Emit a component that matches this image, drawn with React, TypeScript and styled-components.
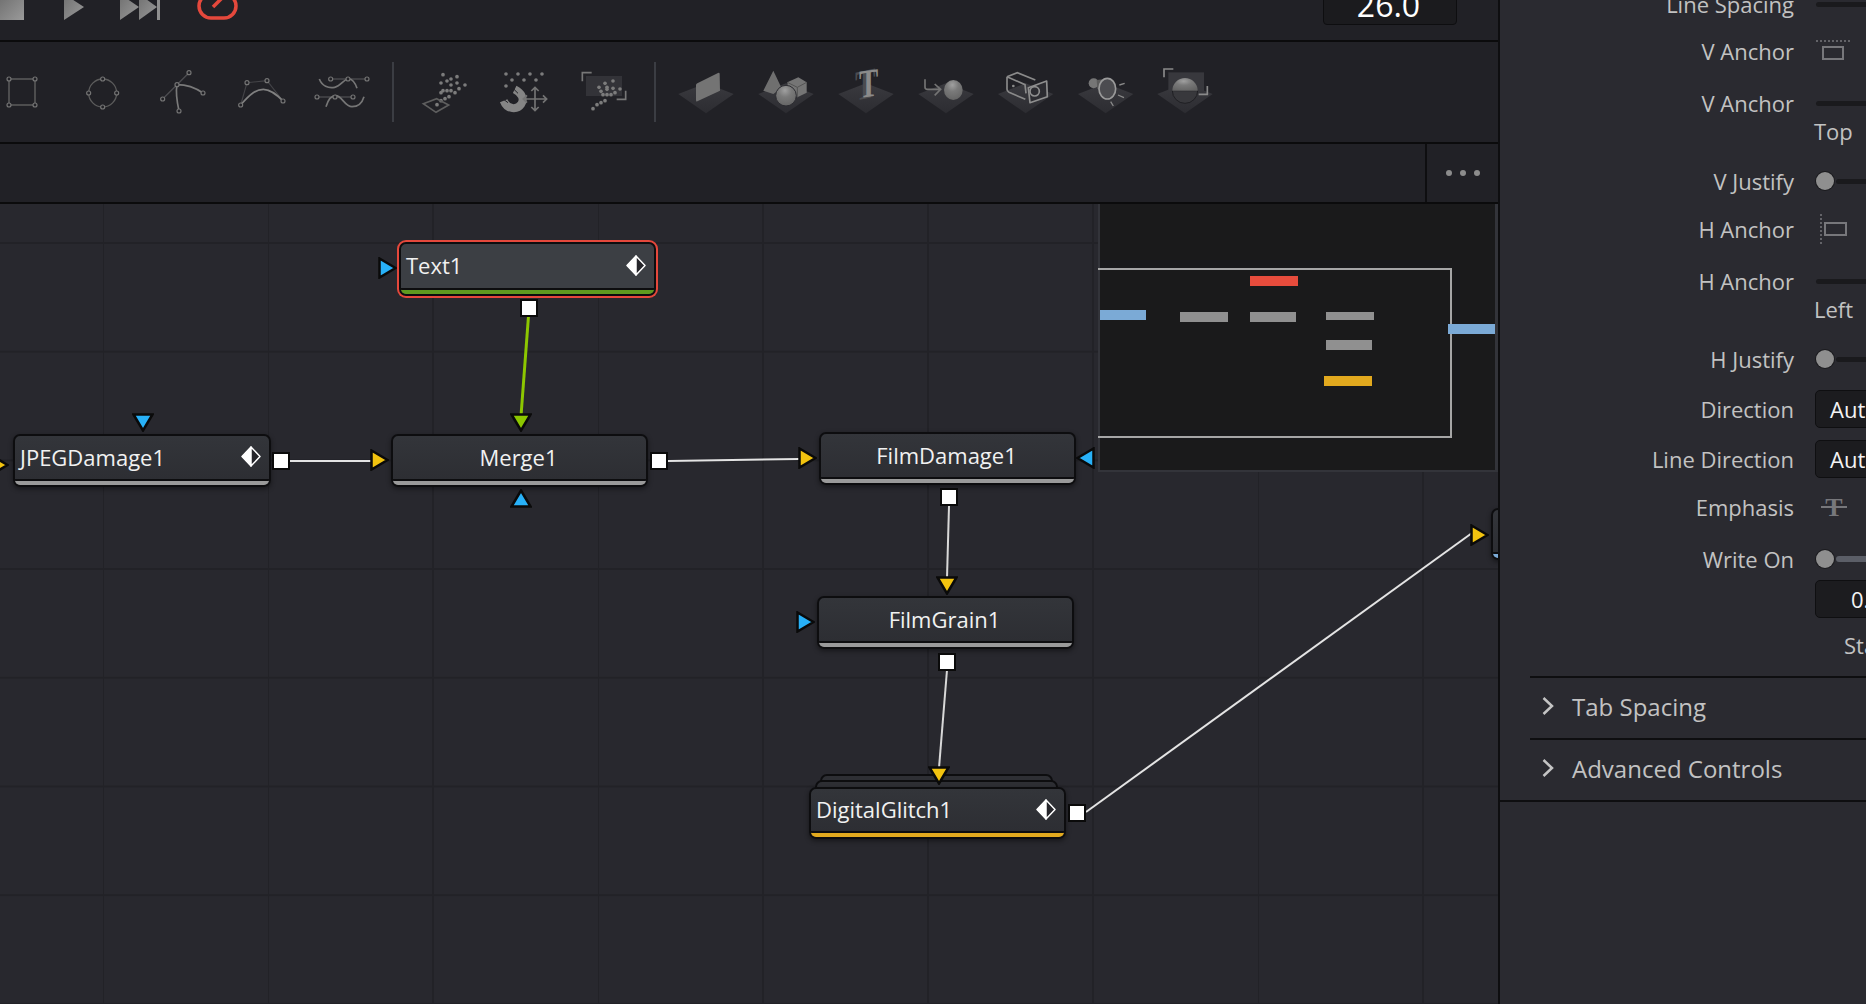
import React from "react";
import styled, { createGlobalStyle } from "styled-components";

const GlobalStyle = createGlobalStyle`
  html, body {
    margin: 0;
    height: 100%;
    background: #28282e;
    overflow: hidden;
    font-family: "Open Sans", "Noto Sans", sans-serif;
  }
`;

const Page = styled.div`
  display: flex;
  width: 1866px;
  height: 1004px;
  overflow: hidden;
`;

const Workspace = styled.div`
  display: flex;
  flex-direction: column;
  width: 1498px;
  flex-shrink: 0;
  border-right: 2px solid #0e0e10;
`;

const TransportBar = styled.div`
  display: flex;
  align-items: flex-end;
  height: 40px;
  overflow: hidden;
  background: #212126;
  border-bottom: 2px solid #0b0b0c;
  flex-shrink: 0;
`;

const TransportIcon = styled.svg<{ $gap: number }>`
  display: block;
  flex-shrink: 0;
  margin-left: ${(p) => p.$gap}px;
  margin-bottom: 20px;
`;

const FpsBox = styled.div`
  display: flex;
  align-items: flex-end;
  justify-content: center;
  margin-left: auto;
  margin-right: 41px;
  margin-bottom: 15px;
  width: 134px;
  height: 44px;
  flex-shrink: 0;
  box-sizing: border-box;
  padding-right: 3px;
  background: #1b1b1e;
  border: 1px solid #0e0e10;
  border-radius: 4px;
  color: #fff;
  font-size: 32px;
  line-height: 38px;
`;

const Toolbar = styled.div`
  display: flex;
  align-items: center;
  height: 100px;
  background: #212126;
  border-bottom: 2px solid #0b0b0c;
  flex-shrink: 0;
`;

const ToolGroup = styled.div<{ $left: number }>`
  display: flex;
  margin-left: ${(p) => p.$left}px;
`;

const ToolSeparator = styled.div<{ $left: number }>`
  width: 2px;
  height: 60px;
  margin-left: ${(p) => p.$left}px;
  background: #3b3d43;
`;

const TabBar = styled.div`
  display: flex;
  justify-content: flex-end;
  height: 58px;
  background: #212126;
  border-bottom: 2px solid #0b0b0c;
  flex-shrink: 0;
`;

const MoreButton = styled.div`
  display: flex;
  align-items: center;
  justify-content: center;
  gap: 8px;
  width: 71px;
  border-left: 2px solid #0e0e10;
`;

const MoreDot = styled.span`
  width: 6px;
  height: 6px;
  border-radius: 50%;
  background: #8c8c8c;
`;

const Canvas = styled.div`
  position: relative;
  flex: 1;
  overflow: hidden;
  background-color: #28282e;
  background-image: linear-gradient(to right, #222227 2px, transparent 2px),
    linear-gradient(to bottom, #222227 2px, transparent 2px);
  background-size: 165px 108.7px;
  background-position: 102px 38px;
`;

const Wires = styled.svg`
  position: absolute;
  left: 0;
  top: 0;
`;

const NodeBox = styled.div<{ $x: number; $y: number; $w: number; $h: number; $selected?: boolean }>`
  position: absolute;
  left: ${(p) => p.$x}px;
  top: ${(p) => p.$y}px;
  width: ${(p) => p.$w}px;
  height: ${(p) => p.$h}px;
  box-sizing: border-box;
  display: flex;
  flex-direction: column;
  overflow: hidden;
  border: 2px solid #0d0d0f;
  border-radius: 7px;
  background: ${(p) => (p.$selected ? "#3c3f44" : "linear-gradient(#33353a, #2c2d32)")};
  box-shadow: ${(p) => (p.$selected ? "0 0 0 2px #e5483c" : "0 2px 5px rgba(0, 0, 0, 0.45)")};
`;

const NodeLabel = styled.div<{ $center?: boolean }>`
  flex: 1;
  display: flex;
  align-items: center;
  justify-content: ${(p) => (p.$center ? "center" : "space-between")};
  padding: ${(p) => (p.$center ? "0 2px 2px 0" : "0 8px 2px 5px")};
  color: #f1f1f1;
  font-size: 22px;
  white-space: nowrap;
`;

const NodeBar = styled.div<{ $color: string }>`
  height: 4px;
  border-top: 2px solid #0d0d0f;
  background: ${(p) => p.$color};
  flex-shrink: 0;
`;

const StackEdge = styled.div<{ $x: number; $y: number; $w: number }>`
  position: absolute;
  left: ${(p) => p.$x}px;
  top: ${(p) => p.$y}px;
  width: ${(p) => p.$w}px;
  height: 20px;
  box-sizing: border-box;
  background: #2e2f34;
  border: 2px solid #0d0d0f;
  border-radius: 7px 7px 0 0;
`;

const OutputPort = styled.div<{ $x: number; $y: number }>`
  position: absolute;
  left: ${(p) => p.$x}px;
  top: ${(p) => p.$y}px;
  width: 18px;
  height: 18px;
  box-sizing: border-box;
  background: #fff;
  border: 2px solid #0a0a0a;
`;

const InputPort = styled.svg<{ $x: number; $y: number }>`
  position: absolute;
  left: ${(p) => p.$x}px;
  top: ${(p) => p.$y}px;
`;

const Minimap = styled.div`
  position: absolute;
  left: 1098px;
  top: 0;
  width: 400px;
  height: 268px;
  box-sizing: border-box;
  background: #1a1a1b;
  border: solid #33343a;
  border-width: 0 3px 2px 2px;
`;

const MiniFrame = styled.div`
  position: absolute;
  left: -2px;
  top: 64px;
  width: 354px;
  height: 170px;
  box-sizing: border-box;
  border: solid #a6a6a6;
  border-width: 2px 2px 2px 0;
`;

const MiniNode = styled.div<{ $x: number; $y: number; $w: number; $h: number; $color: string }>`
  position: absolute;
  left: ${(p) => p.$x}px;
  top: ${(p) => p.$y}px;
  width: ${(p) => p.$w}px;
  height: ${(p) => p.$h}px;
  background: ${(p) => p.$color};
`;

const Inspector = styled.aside`
  flex: 1;
  min-width: 0;
  overflow: hidden;
  background: #2a2a30;
`;

const Rows = styled.div`
  margin-top: -10px;
`;

const Row = styled.div<{ $gap: number }>`
  display: grid;
  grid-template-columns: 294px 300px;
  grid-template-rows: 28px;
  column-gap: 21px;
  align-items: center;
  height: 28px;
  margin-top: ${(p) => p.$gap}px;
`;

const Label = styled.div`
  text-align: right;
  color: #c2c2c2;
  font-size: 22px;
  white-space: nowrap;
`;

const Track = styled.div<{ $light?: boolean; $inset?: number }>`
  height: ${(p) => (p.$light ? 6 : 5)}px;
  margin-left: ${(p) => p.$inset ?? 1}px;
  border-radius: 3px;
  background: ${(p) => (p.$light ? "#5b5e67" : "#1a1a1d")};
`;

const SliderWrap = styled.div`
  position: relative;
`;

const Thumb = styled.div`
  position: absolute;
  left: 1px;
  top: 50%;
  width: 18px;
  height: 18px;
  margin-top: -9px;
  box-sizing: border-box;
  border-radius: 50%;
  background: #8f8f8f;
  box-shadow: 0 0 0 1px #1b1b1e;
`;

const Field = styled.div<{ $inset: number }>`
  display: flex;
  align-items: center;
  height: 38px;
  box-sizing: border-box;
  padding-left: ${(p) => p.$inset}px;
  background: #1c1c1f;
  border: 1px solid #0f0f11;
  border-radius: 5px;
  color: #f4f4f4;
  font-size: 22px;
`;

const Caption = styled.div<{ $inset?: number }>`
  margin-left: -1px;
  padding-left: ${(p) => p.$inset ?? 0}px;
  color: #c2c2c2;
  font-size: 22px;
`;

const Section = styled.div`
  display: flex;
  align-items: center;
  gap: 18px;
  height: 56px;
  padding: 0 0 4px 12px;
  margin-left: 30px;
  border-top: 2px solid #0e0e10;
  color: #c2c2c2;
  font-size: 24px;
`;

const SectionsTop = styled.div`
  margin-top: 17px;
`;

const Divider = styled.div`
  height: 2px;
  background: #0e0e10;
`;

const ToolIcon = ({ origin, children }: { origin: number; children: React.ReactNode }) => (
  <svg width={80} height={100} viewBox={`${origin} -24 240 300`}>
    {children}
  </svg>
);

const Handle = ({ x, y }: { x: number; y: number }) => (
  <circle cx={x} cy={y} r={6} fill="#212126" stroke="#757575" strokeWidth={3.5} />
);

const Dots = ({ points, r = 5.5, fill = "#7c7c7c" }: { points: number[][]; r?: number; fill?: string }) => (
  <g fill={fill}>
    {points.map(([x, y]) => (
      <circle key={`${x}-${y}`} cx={x} cy={y} r={r} />
    ))}
  </g>
);

const Plate = ({ cx }: { cx: number }) => (
  <polygon points={`${cx - 83},132 ${cx},100 ${cx + 83},132 ${cx},190`} fill="url(#plate)" />
);

const SharedDefs = () => (
  <svg width={0} height={0} style={{ position: "absolute" }}>
    <defs>
      <linearGradient id="plate" x1="0" y1="0" x2="0" y2="1">
        <stop offset="0" stopColor="#3a3a3f" />
        <stop offset="1" stopColor="#2c2c31" />
      </linearGradient>
      <radialGradient id="ball" cx="0.45" cy="0.25" r="0.8">
        <stop offset="0" stopColor="#a0a0a0" />
        <stop offset="0.4" stopColor="#7a7a7a" />
        <stop offset="1" stopColor="#636363" />
      </radialGradient>
      <linearGradient id="transport" x1="0" y1="0" x2="1" y2="1">
        <stop offset="0" stopColor="#707070" />
        <stop offset="1" stopColor="#9a9a9a" />
      </linearGradient>
    </defs>
  </svg>
);

const RectTool = () => (
  <ToolIcon origin={-54}>
    <rect x={27} y={87} width={78} height={78} fill="none" stroke="#646464" strokeWidth={4} />
    <Handle x={27} y={87} />
    <Handle x={105} y={87} />
    <Handle x={27} y={165} />
    <Handle x={105} y={165} />
  </ToolIcon>
);

const EllipseTool = () => (
  <ToolIcon origin={186}>
    <ellipse cx={308} cy={129} rx={42} ry={42} fill="none" stroke="#5c5c5c" strokeWidth={4} />
    <Handle x={308} y={87} />
    <Handle x={266} y={129} />
    <Handle x={350} y={129} />
    <Handle x={308} y={171} />
  </ToolIcon>
);

const PolygonTool = () => (
  <ToolIcon origin={426}>
    <path d="M488 147 L531 104 L567 68" fill="none" stroke="#4c4c50" strokeWidth={4} />
    <path d="M531 104 C560 104 590 116 609 129 M531 104 C526 130 532 160 537 183" fill="none" stroke="#7a7a7a" strokeWidth={5} />
    <Handle x={567} y={68} />
    <Handle x={531} y={104} />
    <Handle x={488} y={147} />
    <Handle x={609} y={129} />
    <Handle x={537} y={183} />
  </ToolIcon>
);

const BezierTool = () => (
  <ToolIcon origin={666}>
    <path d="M722 165 L741 98 L801 92 L849 153" fill="none" stroke="#434347" strokeWidth={3.5} />
    <path d="M722 165 C752 130 770 118 790 118 C812 118 830 134 849 153" fill="none" stroke="#808080" strokeWidth={5} />
    <Handle x={722} y={165} />
    <Handle x={741} y={98} />
    <Handle x={801} y={92} />
    <Handle x={849} y={153} />
  </ToolIcon>
);

const BSplineTool = () => (
  <ToolIcon origin={906}>
    <path d="M992 87 L1101 87 M951 141 L1059 141" fill="none" stroke="#47474b" strokeWidth={4} />
    <path
      d="M958 87 C966 108 985 116 1004 112 C1024 108 1030 87 1046 87 C1058 87 1066 100 1071 115 M978 170 C984 150 994 137 1007 137 C1026 137 1034 170 1056 170 C1072 170 1086 160 1092 140"
      fill="none"
      stroke="#767676"
      strokeWidth={5}
    />
    <Handle x={992} y={87} />
    <Handle x={1044} y={87} />
    <Handle x={1101} y={87} />
    <Handle x={951} y={141} />
    <Handle x={1005} y={141} />
    <Handle x={1059} y={141} />
  </ToolIcon>
);

const EmitterTool = () => (
  <ToolIcon origin={75}>
    <Dots
      points={[
        [189, 74], [231, 80], [213, 87], [183, 99], [201, 93], [231, 99], [255, 105], [213, 105],
        [189, 122], [201, 122], [213, 122], [225, 128], [183, 128], [237, 116], [207, 140], [195, 146], [183, 152], [171, 164],
      ]}
    />
    <polygon points="130,161 170,146 206,165 168,187" fill="none" stroke="#5e5e5e" strokeWidth={5} />
  </ToolIcon>
);

const ForceTool = () => (
  <ToolIcon origin={315}>
    <Dots points={[[378, 72], [414, 72], [450, 72], [486, 72], [396, 90], [432, 90], [468, 90], [378, 108]]} />
    <path d="M371 152 C382 180 412 180 424 162 C434 146 424 128 404 118" fill="none" stroke="#858585" strokeWidth={24} />
    <path d="M360 140 L384 158 M392 108 L414 130" stroke="#212126" strokeWidth={3} />
    <path
      d="M465 112 V182 M430 147 H500 M454 123 L465 112 L476 123 M454 171 L465 182 L476 171 M441 136 L430 147 L441 158 M489 136 L500 147 L489 158"
      fill="none"
      stroke="#747474"
      strokeWidth={5}
    />
  </ToolIcon>
);

const RenderParticlesTool = () => (
  <ToolIcon origin={555}>
    <rect x={618} y={78} width={108} height={60} fill="#333338" />
    <path d="M607 94 V68 H635 M737 122 V148 H710" fill="none" stroke="#777" strokeWidth={5} />
    <Dots
      points={[
        [675, 100], [699, 93], [657, 112], [681, 112], [699, 115], [663, 124], [681, 118], [705, 128], [720, 117],
        [669, 134], [681, 134], [693, 134], [675, 152], [663, 158], [651, 164], [639, 176],
      ]}
    />
  </ToolIcon>
);

const PlaneTool = () => (
  <ToolIcon origin={15}>
    <Plate cx={138} />
    <path d="M112 100 L174 69 Q179 67 179 72 L180 122 L112 154 Q108 156 108 150 L108 105 Q108 102 112 100 Z" fill="#747474" />
  </ToolIcon>
);

const ShapesTool = () => (
  <ToolIcon origin={255}>
    <Plate cx={378} />
    <polygon points="340,62 310,122 340,132 365,115" fill="#6f6f6f" />
    <polygon points="382,97 415,82 440,97 440,128 412,142 385,122" fill="#757575" />
    <path d="M382 97 L412 112 L440 97 M412 112 V142" fill="none" stroke="#545454" strokeWidth={3} />
    <circle cx={378} cy={137} r={31} fill="url(#ball)" stroke="#2c2c31" strokeWidth={3} />
  </ToolIcon>
);

const TextTool = () => (
  <ToolIcon origin={495}>
    <Plate cx={618} />
    <g fontFamily="Liberation Serif, serif" fontWeight={700} textAnchor="middle">
      <text transform="translate(616 146) skewY(-12) scale(0.72 1)" fontSize={128} fill="#4b4b4f">T</text>
      <text transform="translate(626 140) skewY(-8) scale(0.72 1)" fontSize={120} fill="#8b8b8b">T</text>
    </g>
  </ToolIcon>
);

const MergeTool = () => (
  <ToolIcon origin={735}>
    <Plate cx={858} />
    <path d="M795 88 V112 Q795 118 802 118 H840 M824 102 L842 118 L824 136" fill="none" stroke="#747474" strokeWidth={5} />
    <ellipse cx={880} cy={120} rx={28} ry={30} fill="url(#ball)" />
  </ToolIcon>
);

const CameraTool = () => (
  <ToolIcon origin={75}>
    <Plate cx={197} />
    <path
      d="M141 80 L172 68 L226 90 M141 80 L141 118 Q141 124 147 127 L196 148 M141 80 L195 104 L198 130"
      fill="none"
      stroke="#8a8a8a"
      strokeWidth={5}
    />
    <circle cx={160} cy={108} r={4} fill="#8a8a8a" />
    <polygon points="205,113 260,93 262,140 210,158" fill="#2c2c31" stroke="#8f8f8f" strokeWidth={5} strokeLinejoin="round" />
    <circle cx={224} cy={124} r={14} fill="none" stroke="#8f8f8f" strokeWidth={5} />
  </ToolIcon>
);

const LightTool = () => (
  <ToolIcon origin={315}>
    <Plate cx={437} />
    <circle cx={401} cy={100} r={15} fill="#767676" />
    <path d="M410 90 L440 86 L440 145 L412 115 Z" fill="#5c5c5c" />
    <ellipse cx={442} cy={116} rx={25} ry={31} fill="#4c4c50" stroke="#9a9a9a" strokeWidth={5} />
    <path d="M478 105 L494 100 M474 135 L492 143 M452 155 L460 168" stroke="#8a8a8a" strokeWidth={4} />
  </ToolIcon>
);

const RenderTool = () => (
  <ToolIcon origin={555}>
    <Plate cx={675} />
    <rect x={625} y={67} width={107} height={58} fill="#38383d" />
    <path d="M612 82 V57 H640 M742 108 V133 H716" fill="none" stroke="#8a8a8a" strokeWidth={5} />
    <path d="M637 122 A38 38 0 0 0 713 122 Z" fill="#38383c" stroke="#1f1f23" strokeWidth={3} />
    <path d="M637 122 A38 38 0 0 1 713 122 Z" fill="url(#ball)" />
  </ToolIcon>
);

const Diamond = () => (
  <svg width={20} height={21} viewBox="0 0 20 21">
    <polygon points="10,1 1,10.5 10,20" fill="#fff" stroke="#fff" strokeWidth={1.5} strokeLinejoin="round" />
    <polygon points="10,1 19,10.5 10,20" fill="#26262b" stroke="#fff" strokeWidth={1.5} strokeLinejoin="round" />
  </svg>
);

type Dir = "right" | "left" | "down" | "up";

const arrowPoints = (dir: Dir, w: number, h: number) => {
  const i = 1.5;
  if (dir === "right") return `${i},${i} ${w - i},${h / 2} ${i},${h - i}`;
  if (dir === "left") return `${w - i},${i} ${i},${h / 2} ${w - i},${h - i}`;
  if (dir === "down") return `${i},${i} ${w - i},${i} ${w / 2},${h - i}`;
  return `${w / 2},${i} ${w - i},${h - i} ${i},${h - i}`;
};

const BLUE = "#28b1f8";
const YELLOW = "#f2c30f";
const GREEN = "#8cc700";

const ports: { x: number; y: number; dir: Dir; color: string }[] = [
  { x: 378, y: 53, dir: "right", color: BLUE },
  { x: 132, y: 209, dir: "down", color: BLUE },
  { x: -10, y: 250, dir: "right", color: YELLOW },
  { x: 370, y: 245, dir: "right", color: YELLOW },
  { x: 510, y: 209, dir: "down", color: GREEN },
  { x: 510, y: 285, dir: "up", color: BLUE },
  { x: 798, y: 243, dir: "right", color: YELLOW },
  { x: 1076, y: 243, dir: "left", color: BLUE },
  { x: 936, y: 372, dir: "down", color: YELLOW },
  { x: 796, y: 407, dir: "right", color: BLUE },
  { x: 928, y: 562, dir: "down", color: YELLOW },
  { x: 1470, y: 320, dir: "right", color: YELLOW },
];

const outputs = [
  { x: 520, y: 95 },
  { x: 272, y: 248 },
  { x: 650, y: 248 },
  { x: 940, y: 284 },
  { x: 938, y: 449 },
  { x: 1068, y: 600 },
];

const GREY_BAR = "#9a9a9a";

const nodes = [
  { name: "Text1", x: 399, y: 38, w: 257, h: 54, bar: "#5f9a1f", selected: true },
  { name: "JPEGDamage1", x: 13, y: 230, w: 258, h: 53, bar: GREY_BAR },
  { name: "Merge1", x: 391, y: 230, w: 257, h: 53, bar: GREY_BAR, center: true },
  { name: "FilmDamage1", x: 819, y: 228, w: 257, h: 53, bar: GREY_BAR, center: true },
  { name: "FilmGrain1", x: 817, y: 392, w: 257, h: 53, bar: GREY_BAR, center: true },
  { name: "DigitalGlitch1", x: 809, y: 583, w: 257, h: 52, bar: "#e2a91e" },
];

const miniNodes = [
  { x: 150, y: 72, w: 48, h: 10, color: "#e74c3c" },
  { x: 0, y: 106, w: 46, h: 10, color: "#7baad6" },
  { x: 80, y: 108, w: 48, h: 10, color: "#909090" },
  { x: 150, y: 108, w: 46, h: 10, color: "#909090" },
  { x: 226, y: 108, w: 48, h: 8, color: "#909090" },
  { x: 226, y: 136, w: 46, h: 10, color: "#909090" },
  { x: 224, y: 172, w: 48, h: 10, color: "#e2a91e" },
  { x: 348, y: 120, w: 47, h: 10, color: "#7baad6" },
];

const Chevron = () => (
  <svg width={12} height={20} viewBox="0 0 12 20">
    <path d="M1.5 2 L10 10 L1.5 18" fill="none" stroke="#c4c4c4" strokeWidth={2.5} />
  </svg>
);

const Slider = ({ light }: { light?: boolean }) => (
  <SliderWrap>
    <Track $light={light} $inset={21} />
    <Thumb />
  </SliderWrap>
);

export default function App() {
  return (
    <Page>
      <GlobalStyle />
      <SharedDefs />
      <Workspace>
        <TransportBar>
          <TransportIcon $gap={0} width={24} height={24} viewBox="0 0 24 24">
            <rect width={24} height={24} fill="url(#transport)" />
          </TransportIcon>
          <TransportIcon $gap={40} width={20} height={26} viewBox="0 0 20 26">
            <polygon points="0,0 20,13 0,26" fill="url(#transport)" />
          </TransportIcon>
          <TransportIcon $gap={36} width={40} height={26} viewBox="0 0 40 26">
            <polygon points="0,0 19,13 0,26" fill="url(#transport)" />
            <polygon points="19,0 37,13 19,26" fill="url(#transport)" />
            <rect x={37} width={3} height={26} fill="#8f8f8f" />
          </TransportIcon>
          <TransportIcon $gap={37} width={41} height={28} viewBox="0 0 41 28">
            <rect x={2} y={2} width={37} height={24} rx={12} fill="none" stroke="#e5483c" strokeWidth={3.5} />
            <path d="M16 15 L25 6" stroke="#e5483c" strokeWidth={3.5} />
          </TransportIcon>
          <FpsBox>26.0</FpsBox>
        </TransportBar>

        <Toolbar>
          <ToolGroup $left={-18}>
            <RectTool />
            <EllipseTool />
            <PolygonTool />
            <BezierTool />
            <BSplineTool />
          </ToolGroup>
          <ToolSeparator $left={10} />
          <ToolGroup $left={11}>
            <EmitterTool />
            <ForceTool />
            <RenderParticlesTool />
          </ToolGroup>
          <ToolSeparator $left={9} />
          <ToolGroup $left={9}>
            <PlaneTool />
            <ShapesTool />
            <TextTool />
            <MergeTool />
            <CameraTool />
            <LightTool />
            <RenderTool />
          </ToolGroup>
        </Toolbar>

        <TabBar>
          <MoreButton>
            <MoreDot />
            <MoreDot />
            <MoreDot />
          </MoreButton>
        </TabBar>

        <Canvas>
          <Wires width={1498} height={800}>
            <line x1={528.5} y1={112} x2={521} y2={212} stroke={GREEN} strokeWidth={3} />
            <line x1={290} y1={257} x2={372} y2={257} stroke="#e4e4e4" strokeWidth={2} />
            <line x1={668} y1={257} x2={800} y2={255} stroke="#e4e4e4" strokeWidth={2} />
            <line x1={949} y1={302} x2={947} y2={374} stroke="#d8d8d8" strokeWidth={2} />
            <line x1={947} y1={466} x2={939} y2={564} stroke="#d8d8d8" strokeWidth={2} />
            <line x1={1086} y1={608} x2={1472} y2={329} stroke="#e4e4e4" strokeWidth={2} />
          </Wires>

          <StackEdge $x={820} $y={570} $w={233} />
          <StackEdge $x={815} $y={576} $w={243} />

          {nodes.map((n) => (
            <NodeBox key={n.name} $x={n.x} $y={n.y} $w={n.w} $h={n.h} $selected={n.selected}>
              <NodeLabel $center={n.center}>
                {n.name}
                {!n.center && <Diamond />}
              </NodeLabel>
              <NodeBar $color={n.bar} />
            </NodeBox>
          ))}

          <NodeBox $x={1491} $y={304} $w={60} $h={52}>
            <NodeLabel />
            <NodeBar $color="#7baad6" />
          </NodeBox>

          {outputs.map((o) => (
            <OutputPort key={`${o.x}-${o.y}`} $x={o.x} $y={o.y} />
          ))}

          {ports.map((p) => {
            const vertical = p.dir === "down" || p.dir === "up";
            const w = vertical ? 22 : 19;
            const h = vertical ? 19 : 22;
            return (
              <InputPort key={`${p.x}-${p.y}`} $x={p.x} $y={p.y} width={w} height={h}>
                <polygon points={arrowPoints(p.dir, w, h)} fill={p.color} stroke="#0a0a0a" strokeWidth={2.5} />
              </InputPort>
            );
          })}

          <Minimap>
            <MiniFrame />
            {miniNodes.map((m) => (
              <MiniNode key={`${m.x}-${m.y}`} $x={m.x} $y={m.y} $w={m.w} $h={m.h} $color={m.color} />
            ))}
          </Minimap>
        </Canvas>
      </Workspace>

      <Inspector>
        <Rows>
          <Row $gap={0}>
            <Label>Line Spacing</Label>
            <Track />
          </Row>
          <Row $gap={19}>
            <Label>V Anchor</Label>
            <svg width={40} height={28} viewBox="0 0 40 28">
              <line x1={1} y1={4} x2={35} y2={4} stroke="#77777b" strokeWidth={1.5} strokeDasharray="2 2" />
              <rect x={8} y={10} width={20} height={12} fill="none" stroke="#77777b" strokeWidth={2} />
            </svg>
          </Row>
          <Row $gap={24}>
            <Label>V Anchor</Label>
            <Track />
          </Row>
          <Row $gap={0}>
            <span />
            <Caption>Top</Caption>
          </Row>
          <Row $gap={22}>
            <Label>V Justify</Label>
            <Slider />
          </Row>
          <Row $gap={20}>
            <Label>H Anchor</Label>
            <svg width={40} height={32} viewBox="0 0 40 32">
              <line x1={6} y1={1} x2={6} y2={31} stroke="#77777b" strokeWidth={1.5} strokeDasharray="2 2" />
              <rect x={10} y={10} width={21} height={12} fill="none" stroke="#77777b" strokeWidth={2} />
            </svg>
          </Row>
          <Row $gap={24}>
            <Label>H Anchor</Label>
            <Track />
          </Row>
          <Row $gap={0}>
            <span />
            <Caption>Left</Caption>
          </Row>
          <Row $gap={22}>
            <Label>H Justify</Label>
            <Slider />
          </Row>
          <Row $gap={22}>
            <Label>Direction</Label>
            <Field $inset={14}>Auto</Field>
          </Row>
          <Row $gap={22}>
            <Label>Line Direction</Label>
            <Field $inset={14}>Auto</Field>
          </Row>
          <Row $gap={20}>
            <Label>Emphasis</Label>
            <svg width={40} height={24} viewBox="0 0 40 24">
              <text x={19} y={21} fontFamily="Liberation Serif, serif" fontSize={26} fontWeight={700} fill="#77777b" textAnchor="middle">T</text>
              <line x1={6} y1={12} x2={32} y2={12} stroke="#77777b" strokeWidth={2} />
            </svg>
          </Row>
          <Row $gap={24}>
            <Label>Write On</Label>
            <Slider light />
          </Row>
          <Row $gap={12}>
            <span />
            <Field $inset={35}>0.0</Field>
          </Row>
          <Row $gap={18}>
            <span />
            <Caption $inset={30}>Start</Caption>
          </Row>
        </Rows>
        <SectionsTop>
          <Section>
            <Chevron />
            Tab Spacing
          </Section>
          <Section>
            <Chevron />
            Advanced Controls
          </Section>
          <Divider />
        </SectionsTop>
      </Inspector>
    </Page>
  );
}
